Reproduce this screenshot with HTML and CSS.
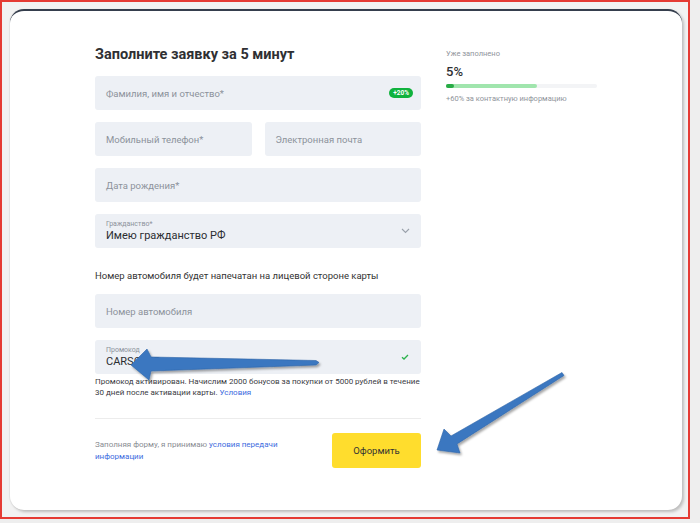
FILE: index.html
```html
<!DOCTYPE html>
<html lang="ru">

<head>
  <meta charset="utf-8">
  <title>Заполните заявку за 5 минут</title>
  <link rel="stylesheet" href="styles.css">
</head>

<body>
  <div class="shot">
    <div class="card">
      <div class="layout">
        <form class="form">
          <h1 class="title">Заполните заявку за 5 минут</h1>

          <div class="field">
            <span class="placeholder">Фамилия, имя и отчество*</span>
            <span class="badge">+20%</span>
          </div>

          <div class="row">
            <div class="field">
              <span class="placeholder">Мобильный телефон*</span>
            </div>
            <div class="field">
              <span class="placeholder">Электронная почта</span>
            </div>
          </div>

          <div class="field">
            <span class="placeholder">Дата рождения*</span>
          </div>

          <div class="field">
            <div class="filled">
              <span class="label">Гражданство*</span>
              <span class="value">Имею гражданство РФ</span>
            </div>
            <svg class="chevron" width="9" height="6" viewBox="0 0 9 6">
              <path d="M1 1l3.5 3.5L8 1" fill="none" stroke="#9aa1ab" stroke-width="1.1" />
            </svg>
          </div>

          <p class="note">Номер автомобиля будет напечатан на лицевой стороне карты</p>

          <div class="field">
            <span class="placeholder">Номер автомобиля</span>
          </div>

          <div class="field field-promo">
            <div class="filled">
              <span class="label">Промокод</span>
              <span class="value">CARSCLUB</span>
            </div>
            <svg class="check" width="8" height="6" viewBox="0 0 8 6">
              <path d="M1 3.2l2 1.8L7 1" fill="none" stroke="#2bb24c" stroke-width="1.3" />
            </svg>
          </div>
          <p class="promo-text">Промокод активирован. Начислим 2000 бонусов за покупки от 5000 рублей в течение<br>30 дней после активации карты. <a href="#">Условия</a></p>

          <div class="footer">
            <p class="terms">Заполняя форму, я принимаю <a href="#">условия передачи</a><br><a href="#">информации</a></p>
            <button type="button" class="submit">Оформить</button>
          </div>
        </form>

        <aside class="progress">
          <div class="progress-caption">Уже заполнено</div>
          <div class="progress-value">5%</div>
          <div class="progress-track">
            <div class="progress-next" style="width: 60%"></div>
            <div class="progress-done" style="width: 5%"></div>
          </div>
          <div class="progress-hint">+60% за контактную информацию</div>
        </aside>
      </div>
    </div>

    <!-- стрелки-пометки поверх скриншота -->
    <svg class="arrows" width="700" height="523" viewBox="0 0 700 523">
      <defs>
        <filter id="shade" x="-10%" y="-30%" width="130%" height="170%">
          <feDropShadow dx="1.5" dy="2" stdDeviation="1.2" flood-color="#000" flood-opacity="0.35" />
        </filter>
      </defs>
      <polygon filter="url(#shade)" fill="#3a77c0" stroke="#2f65a8" stroke-width="0.6"
        points="131,365 147,349 151,357 316,360.5 319,362.5 316,365 151,371 149,380" />
      <polygon filter="url(#shade)" fill="#3a77c0" stroke="#2f65a8" stroke-width="0.6"
        points="437,450 444,429 451,436 562,372.5 564,375.5 457,444 460,453" />
    </svg>
  </div>
</body>

</html>
```

FILE: styles.css
```css
* {
  box-sizing: border-box;
}

body {
  margin: 0;
  background-color: #eeeeee;
  font-family: Roboto, "Liberation Sans", sans-serif;
  color: #333333;
}

/* Рамка скриншота */
.shot {
  position: relative;
  width: 690px;
  height: 519px;
  border: 2px solid #e53b34;
  background-color: #f2f2f2;
  padding: 7px 0 0 8px;
}

.card {
  width: 672px;
  height: 501px;
  background-color: #ffffff;
  border-top: 2px solid #353e4d;
  border-radius: 14px;
  box-shadow: 2px 2px 3px rgba(0, 0, 0, 0.22), -1px 0 1px rgba(0, 0, 0, 0.06);
  padding-top: 35px;
}

.layout {
  width: 502px;
  margin: 0 auto;
  display: grid;
  grid-template-columns: 326px 151px;
  column-gap: 25px;
  align-items: start;
}

/* Форма */
.form {
  display: flex;
  flex-direction: column;
  gap: 12px;
}

.title {
  margin: 0;
  font-size: 14.5px;
  line-height: 18px;
  font-weight: 700;
  color: #2f3033;
}

.row {
  display: grid;
  grid-template-columns: 1fr 1fr;
  column-gap: 13px;
}

.field {
  height: 34px;
  background-color: #edf0f5;
  border-radius: 3px;
  padding: 0 10px 0 11px;
  display: flex;
  align-items: center;
  justify-content: space-between;
}

.placeholder {
  font-size: 9.5px;
  color: #8c929b;
}

.badge {
  background-color: #10b23d;
  color: #ffffff;
  font-size: 6.5px;
  font-weight: 700;
  line-height: 10px;
  padding: 0 4px;
  border-radius: 5px;
  margin-right: -2px;
}

.filled {
  display: flex;
  flex-direction: column;
}

.label {
  font-size: 7px;
  line-height: 9px;
  color: #8c929b;
}

.value {
  font-size: 11px;
  line-height: 13px;
  color: #2b2d31;
}

.chevron {
  margin-right: 1px;
}

.check {
  margin-right: 2px;
}

.note {
  margin: 9px 0 -1px;
  font-size: 9.5px;
  line-height: 14px;
  color: #333333;
}

.promo-text {
  margin: -10px 0 0;
  font-size: 8px;
  line-height: 11px;
  color: #3a3b3f;
}

a {
  color: #3c6be0;
  text-decoration: none;
}

.footer {
  margin-top: 8px;
  border-top: 1px solid #ececec;
  padding-top: 14px;
  display: flex;
  align-items: center;
  justify-content: space-between;
}

.terms {
  margin: 0;
  font-size: 8px;
  line-height: 12px;
  color: #8a8d93;
}

.submit {
  width: 89px;
  height: 35px;
  border: none;
  border-radius: 3px;
  background-color: #ffdd2d;
  font-family: inherit;
  font-size: 9.5px;
  color: #333333;
}

/* Прогресс заполнения */
.progress {
  padding-top: 3px;
}

.progress-caption {
  font-size: 7.5px;
  line-height: 10px;
  color: #8f949b;
}

.progress-value {
  margin-top: 5px;
  font-size: 13px;
  line-height: 16px;
  font-weight: 500;
  color: #2f3033;
}

.progress-track {
  position: relative;
  margin-top: 4px;
  height: 4px;
  border-radius: 2px;
  background-color: #f3f4f6;
}

.progress-next,
.progress-done {
  position: absolute;
  top: 0;
  left: 0;
  height: 4px;
  border-radius: 2px;
}

.progress-next {
  background-color: #a0e5ad;
}

.progress-done {
  background-color: #27ab45;
}

.progress-hint {
  margin-top: 6px;
  font-size: 7.5px;
  line-height: 10px;
  color: #8f949b;
}

/* Пометки поверх скриншота */
.arrows {
  position: absolute;
  top: -2px;
  left: -2px;
  pointer-events: none;
}
```
